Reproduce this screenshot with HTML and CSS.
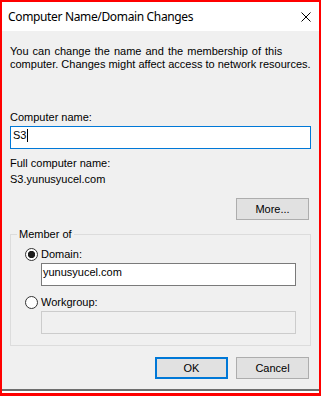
FILE: index.html
```html
<!DOCTYPE html>
<html>
<head>
<meta charset="utf-8">
<link rel="stylesheet" href="styles.css">
</head>
<body>
<div class="window">
  <div class="titlebar">
    <span class="title">Computer Name/Domain Changes</span>
    <svg class="close" width="10" height="10" viewBox="0 0 10 10"><path d="M0.5 0.5 L9.5 9.5 M9.5 0.5 L0.5 9.5" stroke="#000" stroke-width="1" fill="none"/></svg>
  </div>
  <div class="content">
    <p class="desc"><span class="l1">You can change the name and the membership of this</span><br>computer. Changes might affect access to network resources.</p>
    <div class="lbl lbl-name">Computer name:</div>
    <div class="field focused"><span>S3</span><span class="caret"></span></div>
    <div class="lbl lbl-full">Full computer name:</div>
    <div class="lbl lbl-fqdn">S3.yunusyucel.com</div>
    <div class="row-right"><button class="btn">More...</button></div>
    <fieldset class="group">
      <legend>Member of</legend>
      <div class="radio-row"><span class="radio checked"></span><span>Domain:</span></div>
      <div class="field sub">yunusyucel.com</div>
      <div class="radio-row wg"><span class="radio"></span><span>Workgroup:</span></div>
      <div class="field sub disabled"></div>
    </fieldset>
    <div class="actions"><button class="btn default">OK</button><button class="btn">Cancel</button></div>
  </div>
  <div class="bottom-edge"></div>
</div>
</body>
</html>
```
FILE: styles.css
```css
* { box-sizing: border-box; }
html, body { margin: 0; padding: 0; }
body {
  width: 321px;
  height: 396px;
  font-family: "Liberation Sans", Arial, sans-serif;
  font-size: 11px;
  line-height: 13px;
  color: #000;
}
.window {
  width: 321px;
  height: 396px;
  border: 2px solid #ff0000;
  border-bottom-width: 3px;
  display: flex;
  flex-direction: column;
  background: #f0f0f0;
}
.titlebar {
  height: 29px;
  flex: none;
  background: #fff;
  display: flex;
  align-items: center;
  justify-content: space-between;
  padding: 0 8px 0 6px;
}
.title {
  font-family: "Noto Sans", sans-serif;
  font-size: 12px;
  line-height: 16px;
  letter-spacing: -0.35px;
}
.close { display: block; }
.content {
  flex: 1;
  padding: 14px 8px 0 8px;
  display: flex;
  flex-direction: column;
}
.desc { margin: 0; }
.desc .l1 { word-spacing: 1px; }
.lbl-name { margin-top: 40px; }
.field {
  height: 23px;
  border: 1px solid #7a7a7a;
  background: #fff;
  padding: 2px 2px 0;
  display: flex;
  align-items: flex-start;
}
.field.focused { border-color: #0078d7; margin-top: 2px; }
.caret {
  width: 1px;
  height: 13px;
  background: #000;
  margin-left: 1px;
}
.lbl-full { margin-top: 8px; }
.lbl-fqdn { margin-top: 3px; }
.row-right {
  display: flex;
  justify-content: flex-end;
  padding-right: 2px;
  margin-top: 12px;
}
.btn {
  width: 73px;
  height: 22px;
  border: 1px solid #adadad;
  background: #e1e1e1;
  font-family: "Liberation Sans", Arial, sans-serif;
  font-size: 11px;
  line-height: 13px;
  color: #000;
  padding: 0;
  margin: 0;
}
.btn.default { border: 2px solid #0078d7; }
.group {
  margin: 8px 0 0 0;
  border: 1px solid #dcdcdc;
  padding: 7px 14px 11px 14px;
  min-width: 0;
}
.group legend {
  padding: 0 2px;
  margin-left: -8px;
  line-height: 13px;
}
.radio-row {
  display: flex;
  align-items: center;
  height: 13px;
}
.radio-row.wg { margin-top: 10px; }
.radio {
  width: 13px;
  height: 13px;
  border: 1px solid #333;
  border-radius: 50%;
  background: #fff;
  margin-right: 3px;
  flex: none;
}
.radio.checked {
  background: radial-gradient(circle, #1e1e1e 3.4px, #fff 3.9px);
}
.field.sub {
  margin-left: 16px;
  width: 255px;
  margin-top: 2px;
  padding-left: 1px;
}
.field.disabled {
  background: #f0f0f0;
  border-color: #cccccc;
}
.actions {
  display: flex;
  justify-content: flex-end;
  gap: 8px;
  padding-right: 2px;
  margin-top: 11px;
}
.bottom-edge {
  flex: none;
  height: 4px;
  border-top: 2px solid #6e6e6e;
  background: #fff;
}
```
